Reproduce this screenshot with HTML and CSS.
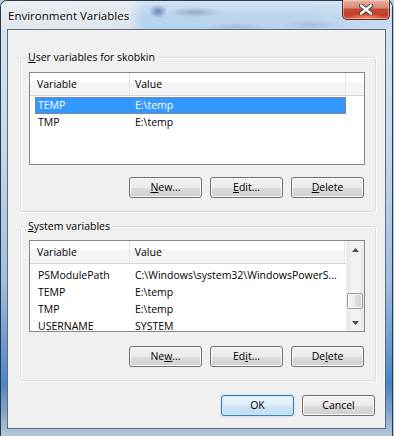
FILE: index.html
```html
<!DOCTYPE html>
<html>
<head>
<meta charset="utf-8">
<title>Environment Variables</title>
<link rel="stylesheet" href="styles.css">
</head>
<body>
<div class="window">
  <div class="titlebar">
    <span class="title">Environment Variables</span>
    <button class="close" aria-label="Close">
      <svg width="14" height="11" viewBox="0 0 14 11">
        <path d="M2 1.5 L12 9.5 M12 1.5 L2 9.5" stroke="#3b3f46" stroke-width="4.2" stroke-linecap="round" fill="none"/>
        <path d="M2 1.5 L12 9.5 M12 1.5 L2 9.5" stroke="#ffffff" stroke-width="2.4" stroke-linecap="round" fill="none"/>
      </svg>
    </button>
  </div>
  <div class="client">
    <section class="group group-user">
      <div class="group-title"><u>U</u>ser variables for skobkin</div>
      <div class="listview lv-user">
        <div class="lv-main">
          <div class="lv-header">
            <div class="hcol h1">Variable</div>
            <div class="hcol h2">Value</div>
            <div class="hcol h3"></div>
          </div>
          <div class="lv-rows">
            <div class="row selected"><span class="c1">TEMP</span><span class="c2">E:\temp</span></div>
            <div class="row"><span class="c1">TMP</span><span class="c2">E:\temp</span></div>
          </div>
        </div>
      </div>
      <div class="buttons">
        <button class="btn"><u>N</u>ew...</button>
        <button class="btn"><u>E</u>dit...</button>
        <button class="btn"><u>D</u>elete</button>
      </div>
    </section>

    <section class="group group-system">
      <div class="group-title"><u>S</u>ystem variables</div>
      <div class="listview lv-system">
        <div class="lv-main">
          <div class="lv-header">
            <div class="hcol h1">Variable</div>
            <div class="hcol h2">Value</div>
            <div class="hcol h3"></div>
          </div>
          <div class="lv-rows">
            <div class="row"><span class="c1">PSModulePath</span><span class="c2">C:\Windows\system32\WindowsPowerS...</span></div>
            <div class="row"><span class="c1">TEMP</span><span class="c2">E:\temp</span></div>
            <div class="row"><span class="c1">TMP</span><span class="c2">E:\temp</span></div>
            <div class="row"><span class="c1">USERNAME</span><span class="c2">SYSTEM</span></div>
          </div>
        </div>
        <div class="scrollbar">
          <div class="sb-arrow">
            <svg width="7" height="4" viewBox="0 0 7 4"><polygon points="0,4 3.5,0 7,4" fill="#4a4a4a"/></svg>
          </div>
          <div class="sb-track"><div class="sb-thumb"></div></div>
          <div class="sb-arrow">
            <svg width="7" height="4" viewBox="0 0 7 4"><polygon points="0,0 7,0 3.5,4" fill="#4a4a4a"/></svg>
          </div>
        </div>
      </div>
      <div class="buttons">
        <button class="btn">Ne<u>w</u>...</button>
        <button class="btn">Ed<u>i</u>t...</button>
        <button class="btn">De<u>l</u>ete</button>
      </div>
    </section>

    <div class="dialog-buttons">
      <button class="btn default">OK</button>
      <button class="btn">Cancel</button>
    </div>
  </div>
</div>
</body>
</html>
```
FILE: styles.css
```css
html, body {
  margin: 0;
  padding: 0;
}

body {
  width: 394px;
  height: 436px;
  overflow: hidden;
  background: #b9cde3;
  font-family: "Segoe UI", "Open Sans", sans-serif;
  font-size: 10.5px;
  color: #000;
}

.window {
  box-sizing: border-box;
  width: 393px;
  height: 436px;
  border: 1px solid #2e3744;
  border-bottom: none;
  border-radius: 7px 7px 0 0;
  display: flex;
  flex-direction: column;
  padding: 0 6px 7px 6px;
  background: linear-gradient(to bottom, #d9e4ef 0, #c4d8ec 35%, #9dbde0 65%, #4b85c8 88%, #7ea3cc 94%, #b7c7d8 100%);
}

.titlebar {
  height: 28px;
  margin: 0 -6px;
  padding: 0 2px 0 7px;
  display: flex;
  align-items: flex-start;
  border-radius: 6px 6px 0 0;
  background:
    linear-gradient(to bottom, rgba(255,255,255,0.35), rgba(255,255,255,0) 55%),
    radial-gradient(ellipse 9px 7px at 157px 10px, rgba(58, 92, 160, 0.8), rgba(58, 92, 160, 0)),
    radial-gradient(ellipse 26px 5px at 194px 11px, rgba(96, 112, 138, 0.5), rgba(96, 112, 138, 0)),
    radial-gradient(ellipse 34px 4px at 235px 26px, rgba(120, 140, 170, 0.35), rgba(120, 140, 170, 0)),
    radial-gradient(ellipse 30px 5px at 310px 24px, rgba(120, 140, 170, 0.3), rgba(120, 140, 170, 0)),
    linear-gradient(to right, #e4e9ef 0, #dfe5ec 128px, #b8d3ee 142px, #bad4ee 300px, #c6dbef 392px);
}

.title {
  line-height: 29px;
  font-size: 11.5px;
  text-shadow: 0 0 6px #fff, 0 0 3px #fff;
}

.close {
  margin: -1px 0 0 auto;
  width: 48px;
  height: 20px;
  padding: 0;
  border: 1px solid #6b2a1f;
  border-top: none;
  border-radius: 0 0 5px 5px;
  background:
    radial-gradient(ellipse 20px 6px at 50% 100%, rgba(255, 170, 120, 0.8), rgba(255, 170, 120, 0)),
    linear-gradient(to bottom, #eab2a5 0, #d98876 40%, #c34a32 50%, #c0402a 80%, #d4583f 100%);
  box-shadow: inset 0 0 0 1px rgba(255, 220, 210, 0.45);
  display: flex;
  align-items: center;
  justify-content: center;
}

.client {
  flex: 1;
  border: 1px solid #5f6b7b;
  background: #f0f0f0;
  display: flex;
  flex-direction: column;
}

.group {
  box-sizing: border-box;
  width: 356px;
  margin-left: 12px;
  border: 1px solid #d5dfe5;
  border-radius: 3px;
  box-shadow: inset 1px 1px 0 #fff, 1px 1px 0 #fff;
  padding: 0 10px 13px 8px;
}

.group-user {
  margin-top: 27px;
}

.group-system {
  margin-top: 14px;
}

.group-title {
  width: fit-content;
  margin: -8px 0 0 -2px;
  padding: 0 2px 0 1px;
  line-height: 15px;
  height: 15px;
  background: #f0f0f0;
}

.listview {
  box-sizing: border-box;
  width: 336px;
  border: 1px solid #828790;
  background: #fff;
  display: flex;
}

.lv-user {
  margin-top: 7px;
  height: 93px;
}

.lv-system {
  margin-top: 6px;
  height: 92px;
}

.lv-main {
  flex: 1;
  min-width: 0;
}

.lv-header {
  box-sizing: border-box;
  height: 23px;
  display: flex;
  border-bottom: 1px solid #d5d5d5;
  background: linear-gradient(to bottom, #ffffff 0, #ffffff 40%, #f4f5f7 42%, #f3f4f6 100%);
}

.hcol {
  box-sizing: border-box;
  line-height: 22px;
  white-space: nowrap;
}

.h1 {
  width: 100px;
  padding-left: 7px;
  border-right: 1px solid #e2e5ea;
}

.h2 {
  width: 216px;
  padding-left: 5px;
  border-right: 1px solid #e2e5ea;
}

.h3 {
  flex: 1;
  border-left: 1px solid #fff;
}

.lv-rows {
  padding: 1px 0 0 5px;
}

.lv-system .lv-rows {
  padding-top: 3px;
}

.row {
  box-sizing: border-box;
  width: 311px;
  height: 17px;
  border: 1px solid transparent;
  display: flex;
  line-height: 15px;
  white-space: nowrap;
}

.row .c1 {
  box-sizing: border-box;
  width: 94px;
  padding-left: 2px;
}

.row .c2 {
  padding-left: 5px;
}

.row.selected {
  background: #3399ff;
  color: #fff;
  border: 1px dotted #c8732c;
}

.scrollbar {
  width: 17px;
  display: flex;
  flex-direction: column;
  background: linear-gradient(to right, #e6e6e6 0, #f2f2f2 30%, #f2f2f2 70%, #e9e9e9 100%);
  border-left: 1px solid #efefef;
}

.sb-arrow {
  height: 17px;
  display: flex;
  align-items: center;
  justify-content: center;
}

.sb-track {
  flex: 1;
}

.sb-thumb {
  box-sizing: border-box;
  margin: 35px 0 0 0;
  width: 16px;
  height: 16px;
  border: 1px solid #999;
  border-radius: 2px;
  background: linear-gradient(to right, #f5f5f5 0, #ececec 50%, #dcdcdc 51%, #d2d2d2 100%);
  box-shadow: inset 0 0 0 1px #fafafa;
}

.buttons {
  display: flex;
  justify-content: flex-end;
  gap: 8px;
  margin-top: 12px;
  padding-right: 1px;
}

.group-system .buttons {
  margin-top: 14px;
}

.btn {
  box-sizing: border-box;
  width: 73px;
  height: 21px;
  padding: 0;
  border: 1px solid #707070;
  border-radius: 3px;
  background: linear-gradient(to bottom, #f2f2f2 0, #ebebeb 50%, #dddddd 50%, #cfcfcf 100%);
  box-shadow: inset 0 0 0 1px #fbfbfb;
  font: inherit;
  color: #000;
  line-height: 19px;
  text-align: center;
}

.btn.default {
  border-color: #3c7fb1;
  background: linear-gradient(to bottom, #eaf4fb 0, #e0eef9 50%, #cde4f5 50%, #c2ddf2 100%);
  box-shadow: inset 0 0 0 1px #c9e6fa, 0 0 2px rgba(80, 160, 230, 0.5);
}

.dialog-buttons {
  display: flex;
  justify-content: flex-end;
  gap: 8px;
  margin: 14px 10px 0 0;
}
```
